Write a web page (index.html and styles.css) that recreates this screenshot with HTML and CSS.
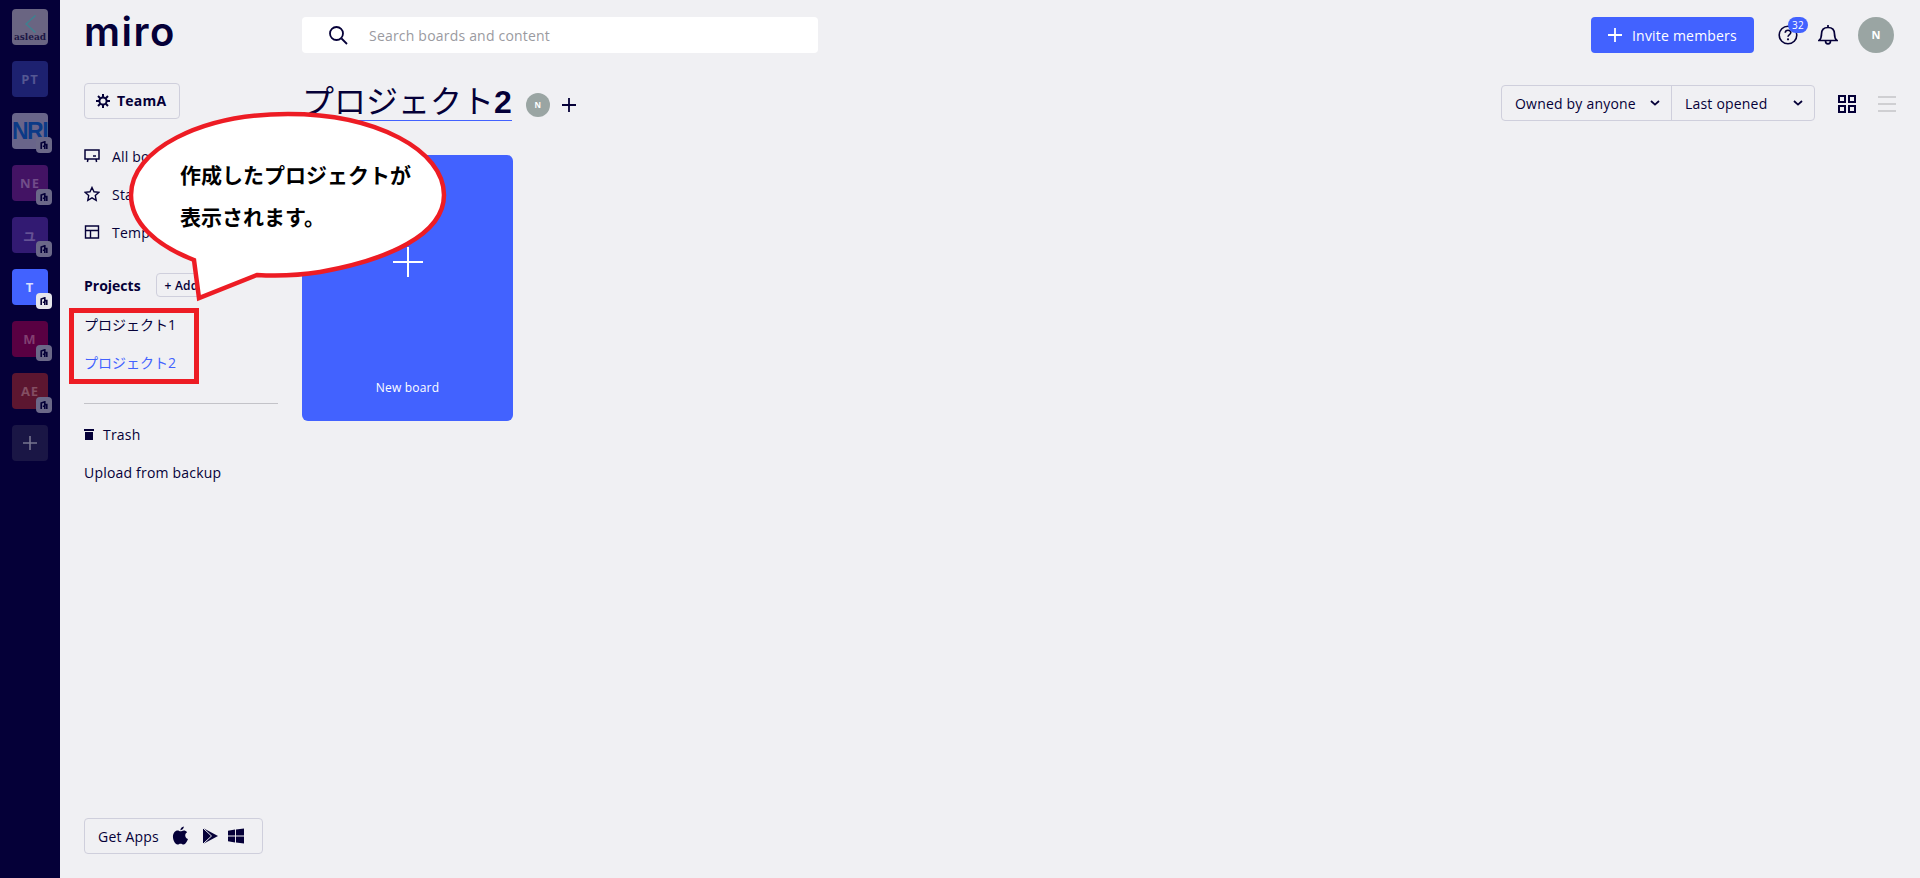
FILE: index.html
```html
<!DOCTYPE html>
<html lang="ja">
<head>
  <meta charset="UTF-8">
  <title>Miro - プロジェクト2</title>
  <link rel="stylesheet" href="styles.css">
</head>
<body>
  <nav class="rail">
    <div class="tile tile-aslead">
      <svg class="aslead-arrow" width="11" height="18" viewBox="0 0 11 18"><path d="M10.500 .5 1 9l9.500 8.500" fill="none" stroke="#3d8290" stroke-width="1.500"/></svg>
      <span class="aslead-name">aslead</span>
    </div>
    <div class="tile tile-pt">PT</div>
    <div class="tile tile-nri"><span class="nri-name">NRI</span><span class="lock"><svg width="8" height="8" viewBox="0 0 10 10"><path d="M1.500 10V2.500L6 1v9M6 4.500h2.500V10M3.500 6.500H6" fill="none" stroke="#050038" stroke-width="2"/></svg></span></div>
    <div class="tile tile-ne">NE<span class="lock"><svg width="8" height="8" viewBox="0 0 10 10"><path d="M1.500 10V2.500L6 1v9M6 4.500h2.500V10M3.500 6.500H6" fill="none" stroke="#050038" stroke-width="2"/></svg></span></div>
    <div class="tile tile-yu">ユ<span class="lock"><svg width="8" height="8" viewBox="0 0 10 10"><path d="M1.500 10V2.500L6 1v9M6 4.500h2.500V10M3.500 6.500H6" fill="none" stroke="#050038" stroke-width="2"/></svg></span></div>
    <div class="tile tile-t">T<span class="lock lock-on"><svg width="8" height="8" viewBox="0 0 10 10"><path d="M1.500 10V2.500L6 1v9M6 4.500h2.500V10M3.500 6.500H6" fill="none" stroke="#050038" stroke-width="2"/></svg></span></div>
    <div class="tile tile-m">M<span class="lock"><svg width="8" height="8" viewBox="0 0 10 10"><path d="M1.500 10V2.500L6 1v9M6 4.500h2.500V10M3.500 6.500H6" fill="none" stroke="#050038" stroke-width="2"/></svg></span></div>
    <div class="tile tile-ae">AE<span class="lock"><svg width="8" height="8" viewBox="0 0 10 10"><path d="M1.500 10V2.500L6 1v9M6 4.500h2.500V10M3.500 6.500H6" fill="none" stroke="#050038" stroke-width="2"/></svg></span></div>
    <div class="tile tile-add"><svg width="16" height="16" viewBox="0 0 16 16"><path d="M8 1v14M1 8h14" stroke="#77758f" stroke-width="1.600"/></svg></div>
  </nav>

  <aside class="sidebar">
    <div class="logo">miro</div>
    <button class="team-btn">
      <svg width="16" height="16" viewBox="0 0 16 16"><circle cx="8" cy="8" r="3.600" fill="none" stroke="#050038" stroke-width="2"/><path d="M8 1v3M8 12v3M1 8h3M12 8h3M3 3l2.200 2.200M10.800 10.800 13 13M13 3l-2.200 2.200M5.200 10.800 3 13" stroke="#050038" stroke-width="2"/></svg>
      TeamA
    </button>
    <ul class="nav">
      <li><svg width="16" height="16" viewBox="0 0 16 16"><path d="M1 2h14v9H1zM9 8h3M4 11l-.6 3M12 11l.6 3" fill="none" stroke="#050038" stroke-width="1.500"/></svg>All boards</li>
      <li><svg width="16" height="16" viewBox="0 0 16 16"><path d="m8 1.500 2 4.300 4.700.6-3.400 3.200.9 4.700L8 11.900l-4.200 2.400.9-4.700L1.300 6.400 6 5.800z" fill="none" stroke="#050038" stroke-width="1.400"/></svg>Starred</li>
      <li><svg width="16" height="16" viewBox="0 0 16 16"><path d="M1.500 2h13v12h-13zM1.500 6.500h13M6.500 6.500V14" fill="none" stroke="#050038" stroke-width="1.400"/></svg>Templates</li>
    </ul>
    <div class="projects-head">
      <b>Projects</b>
      <button class="add-btn">+ Add</button>
    </div>
    <ul class="projects">
      <li>プロジェクト1</li>
      <li class="active">プロジェクト2</li>
    </ul>
    <hr class="rule">
    <div class="trash"><svg width="10" height="11" viewBox="0 0 10 11"><path d="M0 0h10v2H0zM1 3h8v8H1z" fill="#050038"/></svg>Trash</div>
    <div class="upload">Upload from backup</div>
    <div class="get-apps">
      <span>Get Apps</span>
      <svg class="app-apple" width="17" height="20" viewBox="0 0 18 20"><path d="M12.500 0c.2 1.800-1.500 4-3.600 3.900C8.700 2 10.500.2 12.500 0zM9 5c1 0 2-.9 3.500-.9 1.300 0 2.700.7 3.500 1.900-3 1.700-2.500 6 .9 7.300-.9 2.500-2.600 5.700-4.500 5.700-1.300 0-1.800-.8-3.300-.8s-2 .8-3.300.8C3.500 19 1 14.500 1 10.800 1 7 3.300 4.200 6 4.200 7.200 4.200 8.200 5 9 5z" fill="#050038"/></svg>
      <svg class="app-play" width="15" height="16" viewBox="0 0 15 16"><path d="M0 0l15 8-15 8z" fill="#050038"/><path d="M0 0l8.500 8L0 16" fill="none" stroke="#f0f0f3" stroke-width="1"/></svg>
      <svg class="app-win" width="16" height="16" viewBox="0 0 17 16"><path d="M0 2.500 7.500 1.200v6.300H0zM8.500 1 17 0v7.500H8.500zM0 8.500h7.500v6.300L0 13.500zM8.500 8.500H17V16l-8.500-1z" fill="#050038"/></svg>
    </div>
  </aside>

  <main class="main">
    <header class="topbar">
      <div class="search">
        <svg width="20" height="20" viewBox="0 0 20 20"><circle cx="8.500" cy="8.500" r="6.500" fill="none" stroke="#050038" stroke-width="1.800"/><path d="m13.500 13.500 5.500 5.500" stroke="#050038" stroke-width="1.800"/></svg>
        <span>Search boards and content</span>
      </div>
      <div class="top-actions">
        <button class="invite"><svg width="14" height="14" viewBox="0 0 14 14"><path d="M7 0v14M0 7h14" stroke="#fff" stroke-width="1.800"/></svg>Invite members</button>
        <div class="help">
          <svg width="20" height="20" viewBox="0 0 20 20"><circle cx="10" cy="10" r="8.800" fill="none" stroke="#050038" stroke-width="1.600"/><path d="M7.200 7.800C7.300 6 8.500 5.200 10 5.200c1.700 0 2.800 1 2.800 2.400 0 2-2.800 2-2.800 4.200" fill="none" stroke="#050038" stroke-width="1.600"/><circle cx="10" cy="14.300" r="1.100" fill="#050038"/></svg>
          <span class="badge">32</span>
        </div>
        <svg width="20" height="20" viewBox="0 0 20 20"><path d="M1 15.500c2-1.500 2.500-3 2.500-6.500C3.500 5 6 2.500 10 2.500S16.500 5 16.500 9c0 3.500.5 5 2.500 6.500zM7.500 16c0 1.800 1 2.800 2.500 2.800s2.500-1 2.500-2.800" fill="none" stroke="#050038" stroke-width="1.700"/><path d="M10 0v2.500" stroke="#050038" stroke-width="1.700"/></svg>
        <div class="avatar">N</div>
      </div>
    </header>

    <div class="title-row">
      <h1 class="title">プロジェクト<b>2</b></h1>
      <div class="avatar avatar-small">N</div>
      <svg class="title-plus" width="14" height="14" viewBox="0 0 14 14"><path d="M7 0v14M0 7h14" stroke="#050038" stroke-width="1.800"/></svg>
      <div class="filters">
        <div class="filter filter-owner">Owned by anyone<svg width="10" height="6" viewBox="0 0 10 6"><path d="m1 1 4 3.600L9 1" fill="none" stroke="#050038" stroke-width="1.800"/></svg></div>
        <div class="filter filter-sort">Last opened<svg width="10" height="6" viewBox="0 0 10 6"><path d="m1 1 4 3.600L9 1" fill="none" stroke="#050038" stroke-width="1.800"/></svg></div>
      </div>
      <svg class="view-grid" width="18" height="18" viewBox="0 0 18 18"><path d="M1 1h6v6H1zM11 1h6v6h-6zM1 11h6v6H1zM11 11h6v6h-6z" fill="none" stroke="#050038" stroke-width="2"/></svg>
      <svg class="view-list" width="18" height="16" viewBox="0 0 18 16"><path d="M0 1h18M0 8h18M0 15h18" stroke="#c3c3c8" stroke-width="1.600"/></svg>
    </div>

    <div class="board-new">
      <svg width="30" height="30" viewBox="0 0 30 30"><path d="M15 0v30M0 15h30" stroke="#fff" stroke-width="2"/></svg>
      <span>New board</span>
    </div>
  </main>

  <div class="highlight"></div>
  <div class="callout">
    <svg width="330" height="200" viewBox="0 0 330 200"><path d="M69 150C30 135 6 112 6 85 6 40 75 4 163 4s156 36 156 81c0 40-57 65-124 77-25 4-45 4-63 3L74 188z" fill="#fff" stroke="#ed1c24" stroke-width="4.500"/></svg>
    <p class="callout-text">作成したプロジェクトが<br>表示されます。</p>
  </div>
</body>
</html>
```

FILE: styles.css
```css
* {
  box-sizing: border-box;
}
html, body {
  height: 100%;
}
body {
  margin: 0;
  display: flex;
  overflow: hidden;
  background: #f0f0f3;
  color: #050038;
  font: 14px "Open Sans", "Noto Sans CJK JP", sans-serif;
  letter-spacing: 0.2px;
}
button {
  font: inherit;
  letter-spacing: inherit;
  color: inherit;
  background: none;
}
ul {
  list-style: none;
  margin: 0;
  padding: 0;
}

/* left rail */
.rail {
  width: 60px;
  flex: none;
  display: flex;
  flex-direction: column;
  align-items: center;
  gap: 16px;
  padding-top: 9px;
  background: #050038;
}
.tile {
  position: relative;
  width: 36px;
  height: 36px;
  flex: none;
  display: flex;
  align-items: center;
  justify-content: center;
  border-radius: 4px;
  font-size: 13px;
  font-weight: 700;
  color: rgba(255,255,255,0.25);
  letter-spacing: 1px;
}
.tile-aslead {
  flex-direction: column;
  justify-content: flex-start;
  background: #6a6582;
  padding-top: 6px;
}
.aslead-arrow {
  flex: none;
}
.aslead-name {
  font: bold 9px/9px "DejaVu Serif", serif;
  letter-spacing: 0;
  color: #1c1745;
}
.tile-pt { background: #1d2170; }
.tile-nri { background: #69658a; justify-content: flex-start; }
.nri-name {
  font: bold 23px "Liberation Sans", sans-serif;
  letter-spacing: -1.500px;
  color: #0b3a87;
}
.tile-ne { background: #431364; }
.tile-yu { background: #321a72; }
.tile-t { background: #4262ff; color: #d9dfff; }
.tile-m { background: #590042; }
.tile-ae { background: #5c1630; }
.tile-add { background: #1a1645; }
.lock {
  position: absolute;
  right: -4px;
  bottom: -4px;
  width: 16px;
  height: 16px;
  display: flex;
  align-items: center;
  justify-content: center;
  border-radius: 4px;
  background: #6b6888;
}
.lock-on {
  background: #e6e6eb;
}

/* sidebar */
.sidebar {
  width: 242px;
  flex: none;
  display: flex;
  flex-direction: column;
  padding: 0 24px 24px;
}
.logo {
  height: 83px;
  padding-top: 12px;
  font: 600 40px/40px "Inter", sans-serif;
  letter-spacing: 1.500px;
}
.team-btn {
  width: 96px;
  height: 36px;
  display: flex;
  align-items: center;
  gap: 6px;
  padding: 0 0 1px 10px;
  border: 1px solid #cfcfdc;
  border-radius: 4px;
  font-weight: 700;
}
.nav {
  margin-top: 18px;
}
.nav li {
  height: 38px;
  display: flex;
  align-items: center;
  gap: 12px;
}
.projects-head {
  display: flex;
  align-items: center;
  height: 24px;
  margin-top: 22px;
}
.projects-head b {
  letter-spacing: 0;
}
.add-btn {
  height: 24px;
  margin-left: 15px;
  padding: 0 8px;
  border: 1px solid #cfcfdc;
  border-radius: 4px;
  font-size: 12px;
  font-weight: 600;
}
.projects {
  margin-top: 9px;
  letter-spacing: 0;
}
.projects li {
  height: 38px;
  line-height: 38px;
}
.projects .active {
  color: #4262ff;
}
.rule {
  width: 194px;
  margin: 21px 0 0;
  border: 0;
  border-top: 1px solid #c3c3c8;
}
.trash {
  display: flex;
  align-items: center;
  gap: 9px;
  margin-top: 20px;
  height: 20px;
}
.upload {
  margin-top: 19px;
  height: 20px;
}
.get-apps {
  margin-top: auto;
  width: 179px;
  height: 36px;
  display: flex;
  align-items: center;
  padding-left: 13px;
  border: 1px solid #cfcfdc;
  border-radius: 4px;
}
.app-apple {
  margin-left: 13px;
}
.app-play {
  margin-left: 14px;
}
.app-win {
  margin-left: 10px;
}

/* main */
.main {
  flex: 1;
  padding-right: 24px;
  min-width: 0;
}
.topbar {
  display: flex;
  align-items: center;
  justify-content: space-between;
  height: 36px;
  margin-top: 17px;
}
.search {
  width: 516px;
  height: 36px;
  display: flex;
  align-items: center;
  gap: 21px;
  padding-left: 26px;
  background: #fff;
  border-radius: 4px;
  color: #9a9a9f;
}
.top-actions {
  display: flex;
  align-items: center;
  gap: 20px;
  margin-right: 2px;
}
.invite {
  width: 163px;
  height: 36px;
  display: flex;
  align-items: center;
  gap: 10px;
  padding: 0 0 0 17px;
  border: 0;
  border-radius: 4px;
  background: #4262ff;
  color: #fff;
}
.help {
  position: relative;
  width: 20px;
  height: 20px;
  margin-left: 4px;
}
.badge {
  position: absolute;
  left: 10px;
  top: -8px;
  width: 20px;
  height: 16px;
  border-radius: 8px;
  background: #4262ff;
  color: #fff;
  font-size: 10px;
  line-height: 16px;
  text-align: center;
}
.avatar {
  width: 36px;
  height: 36px;
  border-radius: 50%;
  background: #9aa5a3;
  color: #fff;
  font-size: 11px;
  font-weight: 700;
  line-height: 36px;
  text-align: center;
}

.title-row {
  display: flex;
  align-items: center;
  height: 68px;
  margin-top: 17px;
}
.title {
  position: relative;
  top: -1px;
  margin: 0;
  font: 400 32px/35px "Liberation Sans", "Noto Sans CJK JP", sans-serif;
  letter-spacing: 0;
  border-bottom: 1px solid #4262ff;
}
.avatar-small {
  width: 24px;
  height: 24px;
  margin-left: 14px;
  margin-top: 2px;
  font-size: 8px;
  line-height: 24px;
}
.title-plus {
  margin-left: 12px;
  margin-top: 2px;
}
.filters {
  position: relative;
  top: -1px;
  display: flex;
  height: 36px;
  margin-left: auto;
  border: 1px solid #cfcfdc;
  border-radius: 4px;
}
.filter {
  display: flex;
  align-items: center;
  justify-content: space-between;
  padding: 0 11px 0 13px;
}
.filter-owner {
  width: 170px;
  border-right: 1px solid #cfcfdc;
}
.filter-sort {
  width: 142px;
}
.view-grid {
  margin-left: 23px;
}
.view-list {
  margin-left: 22px;
}

.board-new {
  width: 211px;
  height: 266px;
  margin-top: 17px;
  padding-top: 92px;
  display: flex;
  flex-direction: column;
  align-items: center;
  background: #4262ff;
  border-radius: 6px;
  color: #fff;
  font-size: 12px;
}
.board-new span {
  margin-top: 102px;
}

/* annotation overlays */
.highlight {
  position: absolute;
  left: 69px;
  top: 308px;
  width: 130px;
  height: 76px;
  border: 5px solid #ed1c24;
}
.callout {
  position: absolute;
  left: 125px;
  top: 110px;
  width: 330px;
  height: 200px;
}
.callout svg {
  display: block;
}
.callout-text {
  position: absolute;
  left: 55px;
  top: 44px;
  margin: 0;
  color: #000;
  font: 700 21px/41.500px "Noto Sans CJK JP", sans-serif;
  letter-spacing: 0;
  white-space: nowrap;
}
```
